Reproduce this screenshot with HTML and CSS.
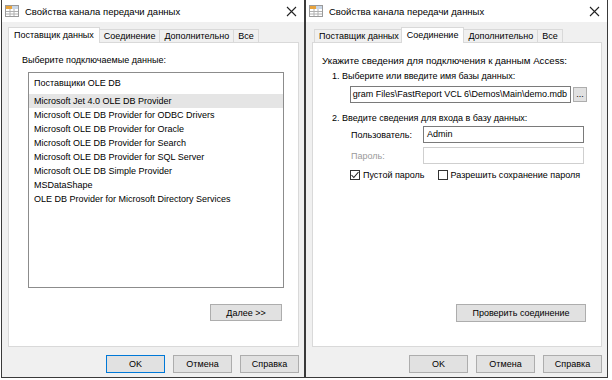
FILE: index.html
```html
<!DOCTYPE html>
<html lang="ru">
<head>
  <meta charset="UTF-8">
  <title>Свойства канала передачи данных</title>
  <link rel="stylesheet" href="styles.css">
</head>
<body>
  <div class="screen">

    <!-- левое окно: Поставщик данных -->
    <div class="dialog dlg-left">
      <div class="titlebar">
        <svg class="app-icon" width="14" height="14" viewBox="0 0 14 14">
          <rect x="0.5" y="1.5" width="13" height="11" fill="#fff" stroke="#9a9a9a"/>
          <rect x="1" y="2" width="6" height="3" fill="#e8a33c"/>
          <rect x="7" y="2" width="6" height="3" fill="#c9d6e6"/>
          <path d="M1 7.5h12M1 10h12M5 5v7M9 5v7" stroke="#b0b0b0" stroke-width="1"/>
        </svg>
        <span class="title">Свойства канала передачи данных</span>
        <svg class="close" width="11" height="11" viewBox="0 0 11 11">
          <path d="M1 1l9 9M10 1l-9 9" stroke="#222" stroke-width="1.1"/>
        </svg>
      </div>
      <div class="content">
        <div class="tabs">
          <div class="tab active">Поставщик данных</div>
          <div class="tab">Соединение</div>
          <div class="tab">Дополнительно</div>
          <div class="tab">Все</div>
        </div>
        <div class="panel">
          <div class="caption">Выберите подключаемые данные:</div>
          <div class="listbox">
            <div class="list-header">Поставщики OLE DB</div>
            <div class="item selected">Microsoft Jet 4.0 OLE DB Provider</div>
            <div class="item">Microsoft OLE DB Provider for ODBC Drivers</div>
            <div class="item">Microsoft OLE DB Provider for Oracle</div>
            <div class="item">Microsoft OLE DB Provider for Search</div>
            <div class="item">Microsoft OLE DB Provider for SQL Server</div>
            <div class="item">Microsoft OLE DB Simple Provider</div>
            <div class="item">MSDataShape</div>
            <div class="item">OLE DB Provider for Microsoft Directory Services</div>
          </div>
          <div class="panel-foot">
            <button class="btn btn-next">Далее &gt;&gt;</button>
          </div>
        </div>
        <div class="buttons">
          <button class="btn btn-main default">OK</button>
          <button class="btn btn-main">Отмена</button>
          <button class="btn btn-main">Справка</button>
        </div>
      </div>
    </div>

    <!-- правое окно: Соединение -->
    <div class="dialog dlg-right">
      <div class="titlebar">
        <svg class="app-icon" width="14" height="14" viewBox="0 0 14 14">
          <rect x="0.5" y="1.5" width="13" height="11" fill="#fff" stroke="#9a9a9a"/>
          <rect x="1" y="2" width="6" height="3" fill="#e8a33c"/>
          <rect x="7" y="2" width="6" height="3" fill="#c9d6e6"/>
          <path d="M1 7.5h12M1 10h12M5 5v7M9 5v7" stroke="#b0b0b0" stroke-width="1"/>
        </svg>
        <span class="title">Свойства канала передачи данных</span>
        <svg class="close" width="11" height="11" viewBox="0 0 11 11">
          <path d="M1 1l9 9M10 1l-9 9" stroke="#222" stroke-width="1.1"/>
        </svg>
      </div>
      <div class="content">
        <div class="tabs">
          <div class="tab">Поставщик данных</div>
          <div class="tab active">Соединение</div>
          <div class="tab">Дополнительно</div>
          <div class="tab">Все</div>
        </div>
        <div class="panel">
          <div class="caption wide">Укажите сведения для подключения к данным Access:</div>
          <div class="step">1. Выберите или введите имя базы данных:</div>
          <div class="file-row">
            <div class="field path"><span>gram Files\FastReport VCL 6\Demos\Main\demo.mdb</span></div>
            <button class="btn btn-browse">...</button>
          </div>
          <div class="step step-2">2. Введите сведения для входа в базу данных:</div>
          <div class="form-row">
            <span class="form-label">Пользователь:</span>
            <div class="field">Admin</div>
          </div>
          <div class="form-row disabled">
            <span class="form-label">Пароль:</span>
            <div class="field"></div>
          </div>
          <div class="check-row">
            <label class="check">
              <span class="box">
                <svg width="10" height="10" viewBox="0 0 10 10"><path d="M1.5 5l2.3 2.5L8.5 2" fill="none" stroke="#222" stroke-width="1.1"/></svg>
              </span>
              Пустой пароль
            </label>
            <label class="check">
              <span class="box"></span>
              Разрешить сохранение пароля
            </label>
          </div>
          <div class="panel-foot">
            <button class="btn btn-test">Проверить соединение</button>
          </div>
        </div>
        <div class="buttons">
          <button class="btn btn-main">OK</button>
          <button class="btn btn-main">Отмена</button>
          <button class="btn btn-main">Справка</button>
        </div>
      </div>
    </div>

  </div>
</body>
</html>
```

FILE: styles.css
```css
body {
  margin: 0;
  background: #fff;
  font-family: "Liberation Sans", Arial, sans-serif;
  font-size: 9px;
  color: #000;
}

.screen {
  display: flex;
  padding-left: 1px;
}

.dialog {
  height: 378px;
  box-sizing: border-box;
  border: 1px solid #3a3a3a;
  border-top: none;
  background: #f0f0f0;
  display: flex;
  flex-direction: column;
}

.dlg-left {
  width: 304px;
}

.dlg-right {
  width: 303px;
}

.titlebar {
  height: 22px;
  flex: none;
  background: #fff;
  display: flex;
  align-items: center;
  padding: 0 7px 0 3px;
}

.title {
  margin-left: 6px;
  font-size: 9.5px;
}

.close {
  margin-left: auto;
}

.content {
  flex: 1;
  display: flex;
  flex-direction: column;
  padding: 0 5px 4px 6px;
}

/* вкладки */
.tabs {
  height: 20px;
  display: flex;
  align-items: flex-end;
  padding-left: 2px;
}

.tab {
  height: 12px;
  line-height: 12px;
  padding: 0 4px;
  border: 1px solid #d9d9d9;
  border-bottom: none;
  background: #f0f0f0;
  margin-right: -1px;
  white-space: nowrap;
}

.tab.active {
  height: 15px;
  line-height: 14px;
  background: #fff;
  margin: 0 -1px -1px -2px;
  padding: 0 5px;
  position: relative;
  z-index: 1;
}

.tab.active + .tab {
  margin-left: 0;
}

.panel {
  height: 305px;
  box-sizing: border-box;
  background: #fff;
  border: 1px solid #d9d9d9;
  display: flex;
  flex-direction: column;
  padding: 12px 0 24px;
}

.caption {
  line-height: 11px;
  margin-left: 13px;
}

.dlg-right .caption {
  margin-left: 9px;
}

.caption.wide {
  font-size: 9.7px;
}

/* список поставщиков */
.listbox {
  width: 256px;
  height: 216px;
  box-sizing: border-box;
  margin: 6px 0 0 19px;
  border: 1px solid #8c8c8c;
}

.list-header {
  height: 21px;
  line-height: 21px;
  padding-left: 5px;
}

.item {
  height: 14px;
  line-height: 14px;
  padding-left: 5px;
  white-space: nowrap;
}

.item.selected {
  background: #e5e5e5;
}

.panel-foot {
  margin-top: auto;
  display: flex;
  justify-content: flex-end;
  padding-right: 15px;
}

.dlg-left .panel-foot {
  padding-right: 16px;
  margin-bottom: 1px;
}

/* кнопки */
.btn {
  font-family: inherit;
  font-size: 9px;
  color: #000;
  background: #e1e1e1;
  border: 1px solid #adadad;
  padding: 0;
  margin: 0;
}

.btn-next {
  width: 72px;
  height: 17px;
}

.btn-test {
  width: 130px;
  height: 18px;
}

.buttons {
  display: flex;
  justify-content: flex-end;
  gap: 8px;
  margin-top: 8px;
}

.btn-main {
  width: 59px;
  height: 18px;
}

.btn-main.default {
  border-color: #0078d7;
}

/* поля соединения */
.step {
  line-height: 11px;
  margin: 5px 0 0 19px;
}

.step-2 {
  margin-top: 10px;
}

.file-row {
  display: flex;
  align-items: center;
  margin: 4px 0 0 37px;
}

.field {
  width: 161px;
  height: 17px;
  box-sizing: border-box;
  border: 1px solid #7a7a7a;
  background: #fff;
  line-height: 15px;
  padding-left: 3px;
  white-space: nowrap;
}

.field.path {
  width: 221px;
  display: flex;
  justify-content: flex-end;
  overflow: hidden;
  padding: 0 3px 0 0;
}

.btn-browse {
  width: 14px;
  height: 15px;
  margin-left: 2px;
  line-height: 9px;
}

.form-row {
  display: flex;
  align-items: center;
  margin: 2px 0 0 38px;
}

.form-row + .form-row {
  margin-top: 4px;
}

.form-label {
  width: 72px;
}

.form-row.disabled .form-label {
  color: #9a9a9a;
}

.form-row.disabled .field {
  border-color: #cfcfcf;
}

.check-row {
  display: flex;
  gap: 13px;
  margin: 6px 0 0 37px;
}

.check {
  display: flex;
  align-items: center;
  gap: 3px;
}

.box {
  width: 10px;
  height: 10px;
  box-sizing: border-box;
  border: 1px solid #333;
  background: #fff;
  display: flex;
  align-items: center;
  justify-content: center;
}

.box svg {
  flex: none;
}
```
